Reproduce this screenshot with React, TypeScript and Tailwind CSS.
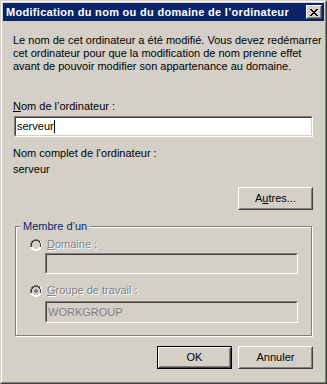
import React from 'react';

const sunken =
  'border border-t-[#808080] border-l-[#808080] border-r-white border-b-white';
const sunkenInner =
  'border border-t-[#404040] border-l-[#404040] border-r-[#d4d0c8] border-b-[#d4d0c8]';
const disabledText = 'text-[#808080] [text-shadow:1px_1px_0_#fff]';

function Button({ children, isDefault }: { children: React.ReactNode; isDefault?: boolean }) {
  const inner = (
    <div className="h-full border border-t-white border-l-white border-r-[#404040] border-b-[#404040]">
      <div className="h-full border border-t-[#d4d0c8] border-l-[#d4d0c8] border-r-[#808080] border-b-[#808080] flex items-center justify-center">
        {children}
      </div>
    </div>
  );
  return (
    <div className={`w-[75px] h-[23px] ${isDefault ? 'border border-black' : ''}`}>{inner}</div>
  );
}

function Radio({ checked }: { checked?: boolean }) {
  return (
    <svg width="12" height="12" viewBox="0 0 12 12" className="shrink-0">
      <path d="M4 0h4v1h2v1h1v2h1v4h-1v2h-1v1h-2v1h-4v-1h-2v-1h-1v-2h-1v-4h1v-2h1v-1h2z" fill="#ffffff" />
      <path d="M4 0h4v1h2v1h-2v-1h-4v1h-2v2h-1v4h-1v-4h1v-2h1v-1h2z" fill="#808080" />
      <path d="M4 1h4v1h2v2h1v4h-1v-4h-1v-1h-1v-1h-4v1h-1v1h-1v4h-1v-4h1v-2h2z" fill="#404040" />
      <path d="M4 2h4v1h1v1h1v4h-1v1h-1v1h-4v-1h-1v-1h-1v-4h1v-1h1z" fill="#d4d0c8" />
      {checked && <path d="M5 4h2v1h1v2h-1v1h-2v-1h-1v-2h1z" fill="#808080" />}
    </svg>
  );
}

export default function App() {
  return (
    <div className="w-[327px] h-[384px] bg-[#d4d0c8] border border-t-[#d4d0c8] border-l-[#d4d0c8] border-r-[#404040] border-b-[#404040] font-['Liberation_Sans',Tahoma,sans-serif] text-[11px] leading-[13px] text-black">
      <div className="h-full border border-t-white border-l-white border-r-[#808080] border-b-[#808080] p-px flex flex-col">
        <div className="h-[18px] bg-[#0a246a] flex items-center justify-between pl-[3px] pr-[2px]">
          <span className="text-white font-bold text-[11px] tracking-[0.3px] whitespace-nowrap">
            Modification du nom ou du domaine de l’ordinateur
          </span>
          <div className="w-[16px] h-[14px] border border-t-white border-l-white border-r-[#404040] border-b-[#404040] bg-[#d4d0c8]">
            <div className="h-full border border-t-[#d4d0c8] border-l-[#d4d0c8] border-r-[#808080] border-b-[#808080] flex items-center justify-center">
              <svg width="8" height="7" viewBox="0 0 8 7">
                <path d="M0 0h2v1h1v1h2v-1h1v-1h2v1h-1v1h-1v1h-1v1h1v1h1v1h1v1h-2v-1h-1v-1h-2v1h-1v1h-2v-1h1v-1h1v-1h1v-1h-1v-1h-1v-1h-1z" fill="#000" />
              </svg>
            </div>
          </div>
        </div>

        <div className="flex flex-col pl-[10px] pr-[11px]">
          <p className="mt-[13px] whitespace-nowrap">
            Le nom de cet ordinateur a été modifié. Vous devez redémarrer
            <br />
            cet ordinateur pour que la modification de nom prenne effet
            <br />
            avant de pouvoir modifier son appartenance au domaine.
          </p>

          <div className="mt-[27px]">
            <span className="underline">N</span>om de l’ordinateur :
          </div>
          <div className={`mt-[3px] ml-px h-[21px] ${sunken}`}>
            <div className={`h-full ${sunkenInner} bg-white flex items-center pl-px`}>
              <span>serveur</span>
              <span className="w-px h-[13px] bg-black" />
            </div>
          </div>

          <div className="mt-[10px]">Nom complet de l’ordinateur :</div>
          <div className="mt-[3px]">serveur</div>

          <div className="mt-[11px] flex justify-end">
            <Button>
              A<span className="underline">u</span>tres...
            </Button>
          </div>

          <div className="relative mt-[16px] ml-[2px] mr-px h-[110px] border border-[#808080] shadow-[inset_1px_1px_0_#fff,1px_1px_0_#fff]">
            <span className="absolute -top-[7px] left-[5px] bg-[#d4d0c8] px-[2px] text-[#0a246a]">
              Membre d’un
            </span>
            <div className="flex flex-col pl-[14px] pr-[13px]">
              <div className="mt-[11px] flex items-center gap-[5px]">
                <Radio />
                <span className={disabledText}>
                  <span className="underline">D</span>omaine :
                </span>
              </div>
              <div className={`mt-[2px] ml-[15px] h-[21px] ${sunken}`}>
                <div className={`h-full ${sunkenInner}`} />
              </div>
              <div className="mt-[10px] flex items-center gap-[5px]">
                <Radio checked />
                <span className={disabledText}>
                  <span className="underline">G</span>roupe de travail :
                </span>
              </div>
              <div className={`mt-[4px] ml-[15px] h-[22px] ${sunken}`}>
                <div className={`h-full ${sunkenInner} flex items-center pl-px text-[#808080]`}>
                  WORKGROUP
                </div>
              </div>
            </div>
          </div>

          <div className="mt-[10px] flex justify-end gap-[6px]">
            <Button isDefault>OK</Button>
            <Button>Annuler</Button>
          </div>
        </div>
      </div>
    </div>
  );
}
